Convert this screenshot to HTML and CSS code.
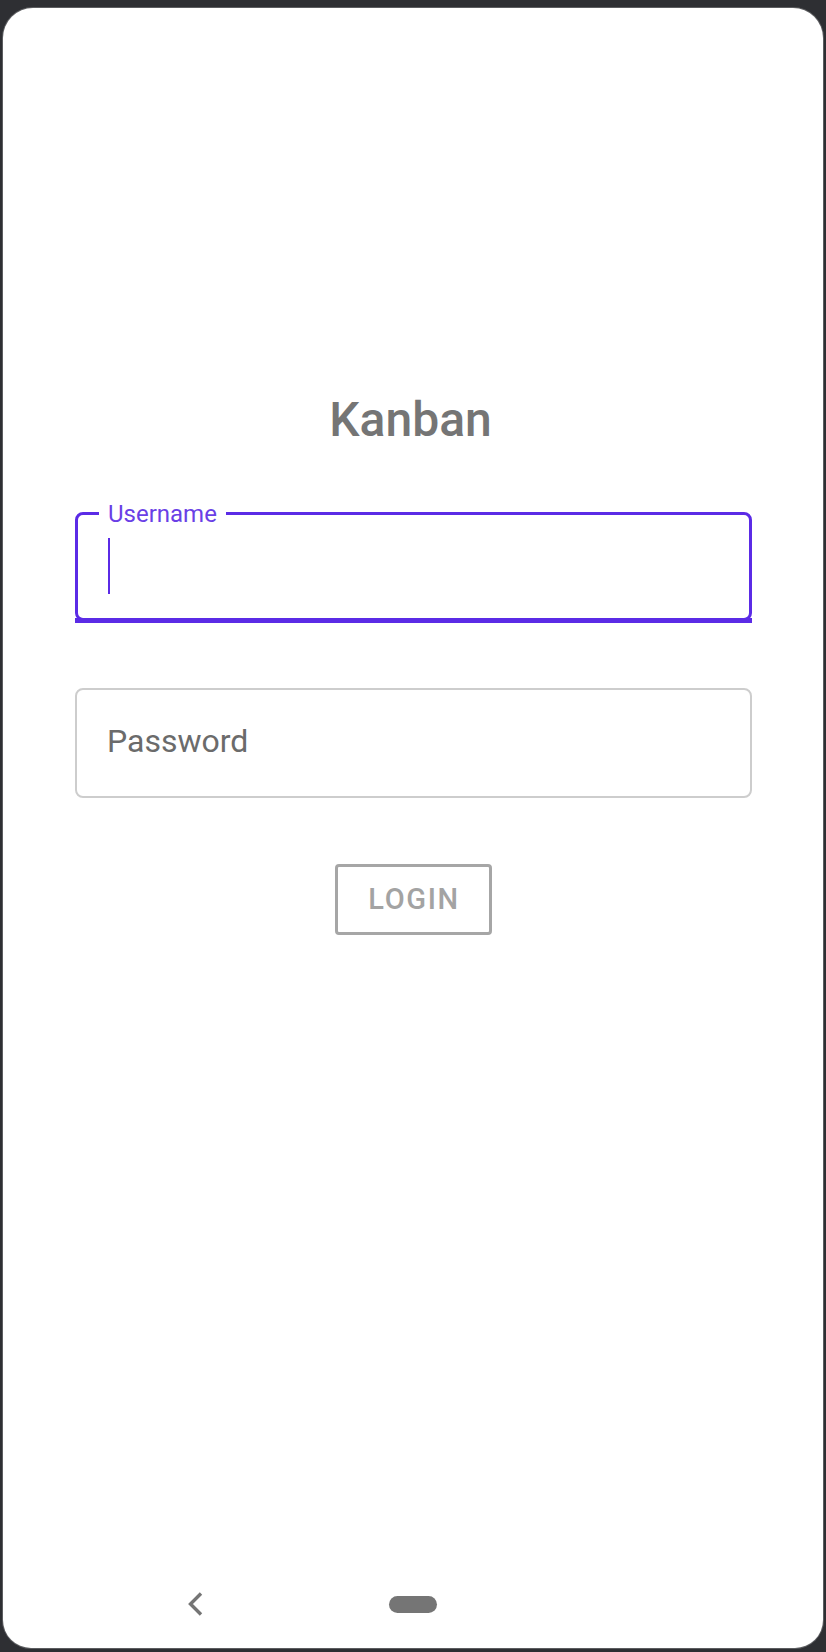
FILE: index.html
```html
<!DOCTYPE html>
<html lang="en">
<head>
<meta charset="utf-8">
<title>Kanban</title>
<link rel="stylesheet" href="styles.css">
</head>
<body>
<div class="screen">
  <main class="form">
    <h1 class="title">Kanban</h1>
    <div class="field field-focused">
      <span class="field-label">Username</span>
      <span class="cursor"></span>
    </div>
    <div class="field field-idle">
      <span class="placeholder">Password</span>
    </div>
    <button class="login" type="button">LOGIN</button>
  </main>
  <nav class="navbar">
    <svg class="back" width="16" height="24" viewBox="0 0 16 24" aria-hidden="true">
      <path d="M14 1.5 L3.5 12 L14 22.5" fill="none" stroke="#757575" stroke-width="3.4"/>
    </svg>
    <span class="home-pill"></span>
  </nav>
</div>
</body>
</html>
```

FILE: styles.css
```css
* {
  box-sizing: border-box;
}

html, body {
  margin: 0;
  padding: 0;
}

body {
  width: 826px;
  height: 1652px;
  background: #2e2f33;
  padding: 8px 3px 4px 3px;
  font-family: Roboto, "Liberation Sans", sans-serif;
  overflow: hidden;
}

.screen {
  width: 820px;
  height: 1640px;
  background: #ffffff;
  border-radius: 30px 30px 28px 28px;
  box-shadow: 0 0 0 1px #5c5d60;
  display: flex;
  flex-direction: column;
}

.form {
  width: 677px;
  margin: 0 0 0 72px;
  padding-top: 384px;
  display: flex;
  flex-direction: column;
  align-items: stretch;
}

.title {
  margin: 0;
  font-size: 48px;
  line-height: 56px;
  font-weight: 500;
  color: #757575;
  text-align: center;
  padding-right: 6px;
}

.field {
  position: relative;
  height: 110px;
  border-radius: 8px;
  display: flex;
  align-items: center;
}

.field-focused {
  margin-top: 64px;
  height: 109px;
  border: 3px solid #5b2be6;
  padding: 23px 30px 0 30px;
  align-items: flex-start;
}

.field-focused::after {
  content: "";
  position: absolute;
  left: -3px;
  right: -3px;
  bottom: -5px;
  height: 5px;
  background: #5b2be6;
}

.field-label {
  position: absolute;
  top: -15px;
  left: 21px;
  padding: 0 9px;
  background: #ffffff;
  font-size: 24px;
  line-height: 28px;
  color: #6a3fe6;
}

.cursor {
  display: block;
  width: 2px;
  height: 56px;
  background: #5b2be6;
}

.field-idle {
  margin-top: 67px;
  border: 2px solid #cdcdcd;
  padding: 0 0 4px 30px;
}

.placeholder {
  font-size: 32px;
  line-height: 38px;
  color: #6b6b6b;
}

.login {
  align-self: center;
  margin-top: 66px;
  width: 157px;
  height: 71px;
  border: 3px solid #a6a6a6;
  border-radius: 4px;
  background: #ffffff;
  font-family: Roboto, "Liberation Sans", sans-serif;
  font-size: 29px;
  font-weight: 500;
  letter-spacing: 1.6px;
  color: #a3a3a3;
  padding: 0 0 0 1px;
  line-height: 1;
}

.navbar {
  margin-top: auto;
  margin-bottom: 32px;
  height: 24px;
  display: flex;
  align-items: center;
  padding-left: 184px;
}

.back {
  display: block;
  flex: none;
}

.home-pill {
  display: block;
  margin-left: 186px;
  width: 48px;
  height: 17px;
  border-radius: 9px;
  background: #757575;
}
```
